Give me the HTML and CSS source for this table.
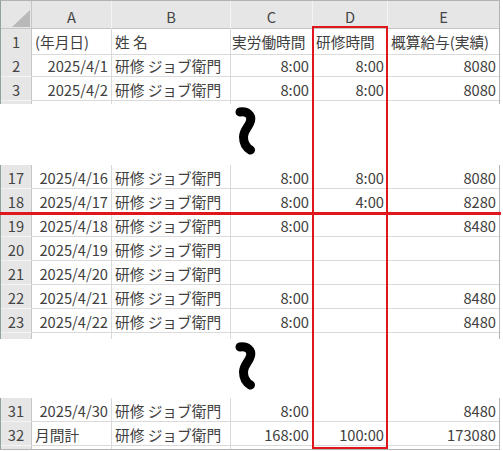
FILE: index.html
```html
<!DOCTYPE html>
<html lang="ja">
<head>
<meta charset="utf-8">
<title>勤務表</title>
<link rel="stylesheet" href="styles.css">
</head>
<body>
<div class="sheet">
  <div class="row hdr">
    <div class="corner"><svg width="30" height="27" viewBox="0 0 30 27"><polygon points="29,9 29,26 11,26" fill="#b9b9b9"/></svg></div>
    <div>A</div><div>B</div><div>C</div><div>D</div><div>E</div>
  </div>
  <div class="row"><div class="rh">1</div><div>(年月日)</div><div>姓 名</div><div class="tight">実労働時間</div><div>研修時間</div><div>概算給与(実績)</div></div>
  <div class="row"><div class="rh">2</div><div class="r">2025/4/1</div><div>研修 ジョブ衛門</div><div class="r">8:00</div><div class="r">8:00</div><div class="r">8080</div></div>
  <div class="row"><div class="rh">3</div><div class="r">2025/4/2</div><div>研修 ジョブ衛門</div><div class="r">8:00</div><div class="r">8:00</div><div class="r">8080</div></div>
  <div class="row part p3"><div class="rh"></div><div></div><div></div><div></div><div></div><div></div></div>
  <div class="gap g1"><svg class="squig" width="24" height="52" viewBox="0 0 24 52"><path d="M6,7 C13,6 18,10 16.5,16 C15,22 9.5,25 9.5,32 C9.5,39 13,43 16.5,45" fill="none" stroke="#000" stroke-width="9" stroke-linecap="round"/></svg></div>
  <div class="row"><div class="rh">17</div><div class="r">2025/4/16</div><div>研修 ジョブ衛門</div><div class="r">8:00</div><div class="r">8:00</div><div class="r">8080</div></div>
  <div class="row"><div class="rh">18</div><div class="r">2025/4/17</div><div>研修 ジョブ衛門</div><div class="r">8:00</div><div class="r">4:00</div><div class="r">8280</div></div>
  <div class="row"><div class="rh">19</div><div class="r">2025/4/18</div><div>研修 ジョブ衛門</div><div class="r">8:00</div><div></div><div class="r">8480</div></div>
  <div class="row"><div class="rh">20</div><div class="r">2025/4/19</div><div>研修 ジョブ衛門</div><div></div><div></div><div></div></div>
  <div class="row"><div class="rh">21</div><div class="r">2025/4/20</div><div>研修 ジョブ衛門</div><div></div><div></div><div></div></div>
  <div class="row"><div class="rh">22</div><div class="r">2025/4/21</div><div>研修 ジョブ衛門</div><div class="r">8:00</div><div></div><div class="r">8480</div></div>
  <div class="row"><div class="rh">23</div><div class="r">2025/4/22</div><div>研修 ジョブ衛門</div><div class="r">8:00</div><div></div><div class="r">8480</div></div>
  <div class="row part p6"><div class="rh"></div><div></div><div></div><div></div><div></div><div></div></div>
  <div class="gap g2"><svg class="squig" width="24" height="52" viewBox="0 0 24 52"><path d="M6,7 C13,6 18,10 16.5,16 C15,22 9.5,25 9.5,32 C9.5,39 13,43 16.5,45" fill="none" stroke="#000" stroke-width="9" stroke-linecap="round"/></svg></div>
  <div class="row"><div class="rh">31</div><div class="r">2025/4/30</div><div>研修 ジョブ衛門</div><div class="r">8:00</div><div></div><div class="r">8480</div></div>
  <div class="row"><div class="rh">32</div><div>月間計</div><div>研修 ジョブ衛門</div><div class="r">168:00</div><div class="r">100:00</div><div class="r">173080</div></div>
  <div class="row part p3"><div class="rh"></div><div></div><div></div><div></div><div></div><div></div></div>

  <div class="mark-line"></div>
  <div class="mark-box"></div>
</div>
</body>
</html>
```

FILE: styles.css
```css
body {
  margin: 0;
  background: #ffffff;
  font-family: "Noto Sans CJK JP", sans-serif;
}

.sheet {
  position: relative;
  width: 500px;
  box-sizing: border-box;
  border: 1px solid #b3b3b3;
  border-left-color: #8ea597;
  background: #ffffff;
}

.row {
  display: grid;
  grid-template-columns: 31px 80px 119px 82px 75px 111px;
  height: 24px;
}

.row > div {
  box-sizing: border-box;
  border-right: 1px solid #dadada;
  border-bottom: 1px solid #dadada;
  padding: 0 3px;
  font-size: 14.7px;
  line-height: 25px;
  color: #404040;
  white-space: nowrap;
  overflow: hidden;
}

.row > div:last-child {
  border-right: none;
}

.row > .r {
  text-align: right;
}

.row > .tight {
  padding-left: 1px;
  overflow: visible;
}

.row > .rh {
  background: #e6e6e6;
  border-right-color: #c6c6c6;
  border-bottom-color: #f4f4f4;
  text-align: center;
  padding: 0;
  color: #444444;
}

.hdr {
  height: 28px;
}

.hdr > div {
  background: #e6e6e6;
  border-right-color: #f4f4f4;
  border-bottom-color: #c6c6c6;
  text-align: center;
  line-height: 31px;
  color: #444444;
}

.hdr > .corner {
  padding: 0;
  border-right-color: #c6c6c6;
}

.corner svg {
  display: block;
}

.part > div {
  border-bottom: none;
}

.p3 {
  height: 3px;
}

.p6 {
  height: 6px;
}

.gap {
  margin: 0 -1px;
  background: #ffffff;
  box-sizing: border-box;
  padding: 1px 0 0 234px;
}

.g1 {
  height: 61px;
}

.g2 {
  height: 59px;
}

.squig {
  display: block;
}

.mark-line {
  position: absolute;
  left: -1px;
  top: 211px;
  width: 501px;
  height: 3px;
  background: #e0161d;
}

.mark-box {
  position: absolute;
  left: 311px;
  top: 25px;
  width: 76px;
  height: 423px;
  box-sizing: border-box;
  border: 2px solid #e0161d;
}
```
